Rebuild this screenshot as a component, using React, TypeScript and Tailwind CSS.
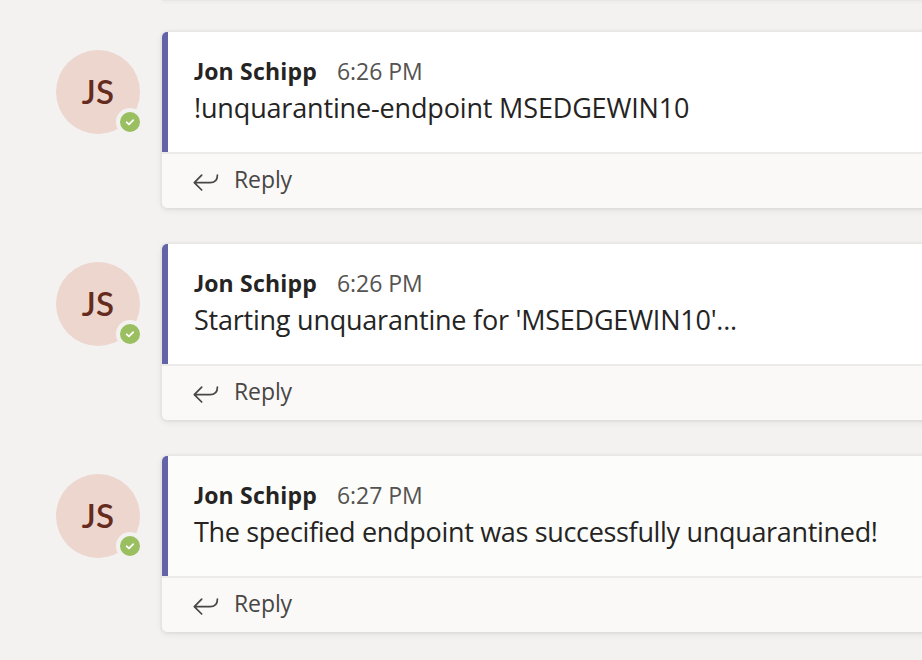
const messages = [
  { time: '6:26 PM', text: '!unquarantine-endpoint MSEDGEWIN10', tracking: 'tracking-[-0.16px]', bg: 'bg-white' },
  { time: '6:26 PM', text: "Starting unquarantine for 'MSEDGEWIN10'...", tracking: 'tracking-[-0.23px]', bg: 'bg-white' },
  { time: '6:27 PM', text: 'The specified endpoint was successfully unquarantined!', tracking: 'tracking-[-0.32px]', bg: 'bg-[#fcfcfa]' },
];

function Avatar() {
  return (
    <div className="relative mt-[18px] flex h-[84px] w-[84px] shrink-0 items-center justify-center rounded-full bg-[#edd6cd]">
      <span className="pb-0.5 font-['Lato',sans-serif] text-[33px] leading-[42px] font-semibold tracking-[0.3px] text-[#642b1e]">JS</span>
      <div className="absolute top-[58px] left-[60px] flex h-7 w-7 items-center justify-center rounded-full border-4 border-[#f3f2f1] bg-[#9abf60]">
        <svg width="12" height="12" viewBox="0 0 12 12" fill="none" stroke="white" strokeWidth="1.8" strokeLinecap="round" strokeLinejoin="round">
          <path d="m2.7 6.3 2.3 2.1 4.2-4.3" />
        </svg>
      </div>
    </div>
  );
}

function ReplyArrow() {
  return (
    <svg className="mt-[19px] shrink-0" width="26" height="20" viewBox="0 0 26 20" fill="none" stroke="#484644" strokeWidth="1.7" strokeLinecap="round" strokeLinejoin="round">
      <path d="M8.7 2.2 1.3 9.6l7.4 7.4M1.3 9.6H17c4.6 0 7.4-2.8 7.4-7.4" />
    </svg>
  );
}

export default function App() {
  return (
    <main className="h-[660px] w-[922px] overflow-hidden bg-[#f3f2f1] font-['Open_Sans','Noto_Sans',sans-serif] whitespace-nowrap">
      <div className="ml-[162px] h-px bg-[#e8e7e6] shadow-[0_1px_3px_rgba(0,0,0,0.08)]" />
      <div className="mt-[31px] flex flex-col gap-[34px] pl-14">
        {messages.map((m, i) => (
          <article key={i} className="flex h-[178px] gap-[22px]">
            <Avatar />
            <section className="h-[176px] w-[780px] shrink-0 overflow-hidden rounded-[5px] bg-[#faf9f8] shadow-[0_0_0_2px_rgba(0,0,0,0.025),0_2px_7px_rgba(0,0,0,0.08)]">
              <div className={`h-[120px] border-l-[6px] border-[#6264a7] pt-[23px] pl-[26px] ${m.bg}`}>
                <div className="flex h-[33px] gap-[21px] text-[23px] leading-8">
                  <h2 className="w-[122px] font-bold tracking-[0.2px] text-[#252423] first-letter:font-['Lato'] first-letter:font-black">Jon Schipp</h2>
                  <time className="tracking-[-0.05px] text-[#555351]">{m.time}</time>
                </div>
                <p className={`text-[27px] leading-10 text-[#252423] ${m.tracking}`}>{m.text}</p>
              </div>
              <div className="flex h-14 items-start gap-[15px] border-t-2 border-[#edebe9] pl-[31px]">
                <ReplyArrow />
                <span className="mt-2 text-[23px] leading-[34px] tracking-[-0.1px] text-[#484644]">Reply</span>
              </div>
            </section>
          </article>
        ))}
      </div>
    </main>
  );
}
